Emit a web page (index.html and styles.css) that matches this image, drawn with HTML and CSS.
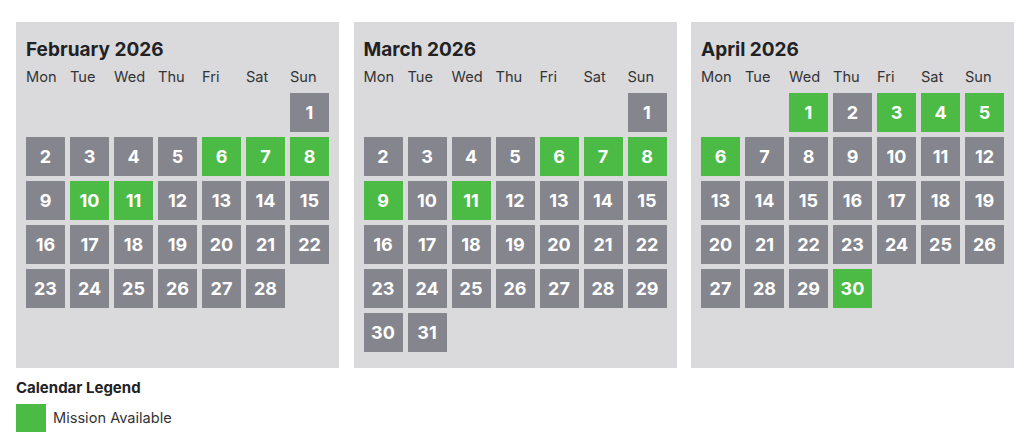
FILE: index.html
```html
<!DOCTYPE html>
<html>
<head>
<meta charset="utf-8">
<link rel="stylesheet" href="styles.css">
</head>
<body>
<div class="page">
  <div class="months">
    <section class="month">
      <h2 class="title">February 2026</h2>
      <div class="grid">
        <span class="dow">Mon</span><span class="dow">Tue</span><span class="dow">Wed</span><span class="dow">Thu</span><span class="dow">Fri</span><span class="dow">Sat</span><span class="dow">Sun</span>
        <span class="blank"></span><span class="blank"></span><span class="blank"></span><span class="blank"></span><span class="blank"></span><span class="blank"></span>
        <span class="day">1</span>
        <span class="day">2</span><span class="day">3</span><span class="day">4</span><span class="day">5</span><span class="day on">6</span><span class="day on">7</span><span class="day on">8</span>
        <span class="day">9</span><span class="day on">10</span><span class="day on">11</span><span class="day">12</span><span class="day">13</span><span class="day">14</span><span class="day">15</span>
        <span class="day">16</span><span class="day">17</span><span class="day">18</span><span class="day">19</span><span class="day">20</span><span class="day">21</span><span class="day">22</span>
        <span class="day">23</span><span class="day">24</span><span class="day">25</span><span class="day">26</span><span class="day">27</span><span class="day">28</span>
      </div>
    </section>
    <section class="month">
      <h2 class="title">March 2026</h2>
      <div class="grid">
        <span class="dow">Mon</span><span class="dow">Tue</span><span class="dow">Wed</span><span class="dow">Thu</span><span class="dow">Fri</span><span class="dow">Sat</span><span class="dow">Sun</span>
        <span class="blank"></span><span class="blank"></span><span class="blank"></span><span class="blank"></span><span class="blank"></span><span class="blank"></span>
        <span class="day">1</span>
        <span class="day">2</span><span class="day">3</span><span class="day">4</span><span class="day">5</span><span class="day on">6</span><span class="day on">7</span><span class="day on">8</span>
        <span class="day on">9</span><span class="day">10</span><span class="day on">11</span><span class="day">12</span><span class="day">13</span><span class="day">14</span><span class="day">15</span>
        <span class="day">16</span><span class="day">17</span><span class="day">18</span><span class="day">19</span><span class="day">20</span><span class="day">21</span><span class="day">22</span>
        <span class="day">23</span><span class="day">24</span><span class="day">25</span><span class="day">26</span><span class="day">27</span><span class="day">28</span><span class="day">29</span>
        <span class="day">30</span><span class="day">31</span>
      </div>
    </section>
    <section class="month">
      <h2 class="title">April 2026</h2>
      <div class="grid">
        <span class="dow">Mon</span><span class="dow">Tue</span><span class="dow">Wed</span><span class="dow">Thu</span><span class="dow">Fri</span><span class="dow">Sat</span><span class="dow">Sun</span>
        <span class="blank"></span><span class="blank"></span>
        <span class="day on">1</span><span class="day">2</span><span class="day on">3</span><span class="day on">4</span><span class="day on">5</span>
        <span class="day on">6</span><span class="day">7</span><span class="day">8</span><span class="day">9</span><span class="day">10</span><span class="day">11</span><span class="day">12</span>
        <span class="day">13</span><span class="day">14</span><span class="day">15</span><span class="day">16</span><span class="day">17</span><span class="day">18</span><span class="day">19</span>
        <span class="day">20</span><span class="day">21</span><span class="day">22</span><span class="day">23</span><span class="day">24</span><span class="day">25</span><span class="day">26</span>
        <span class="day">27</span><span class="day">28</span><span class="day">29</span><span class="day on">30</span>
      </div>
    </section>
  </div>
  <div class="legend">
    <h3 class="legend-title">Calendar Legend</h3>
    <div class="legend-item"><span class="swatch"></span><span class="legend-label">Mission Available</span></div>
  </div>
</div>
</body>
</html>
```

FILE: styles.css
```css
html, body {
  margin: 0;
  padding: 0;
  background: #ffffff;
}
body {
  font-family: Inter, "Noto Sans", "Liberation Sans", sans-serif;
  color: #2b2b2e;
}
.page {
  padding: 22px 0 0 16px;
}
.months {
  display: flex;
  gap: 14.5px;
}
.month {
  box-sizing: border-box;
  width: 323px;
  height: 346px;
  background: #dadadc;
  padding: 17px 10px 10px 10px;
}
.title {
  margin: 0;
  font-size: 19px;
  line-height: 22px;
  font-weight: 700;
  color: #222225;
}
.grid {
  display: grid;
  grid-template-columns: repeat(7, 39px);
  grid-template-rows: 21px;
  grid-auto-rows: 39px;
  gap: 5px;
  margin-top: 6px;
}
.dow {
  grid-row: 1;
  font-size: 14.6px;
  line-height: 20px;
  color: #333336;
}
.day {
  background: #85858d;
  color: #ffffff;
  font-weight: 700;
  font-size: 18px;
  display: flex;
  align-items: center;
  justify-content: center;
}
.day.on {
  background: #4cbb45;
}
.legend {
  padding-top: 11px;
}
.legend-title {
  margin: 0;
  font-size: 15px;
  line-height: 18px;
  font-weight: 700;
  color: #222225;
}
.legend-item {
  display: flex;
  align-items: center;
  gap: 7px;
  margin-top: 7px;
}
.swatch {
  width: 30px;
  height: 28px;
  background: #4cbb45;
}
.legend-label {
  font-size: 14.6px;
  color: #333336;
}
```
